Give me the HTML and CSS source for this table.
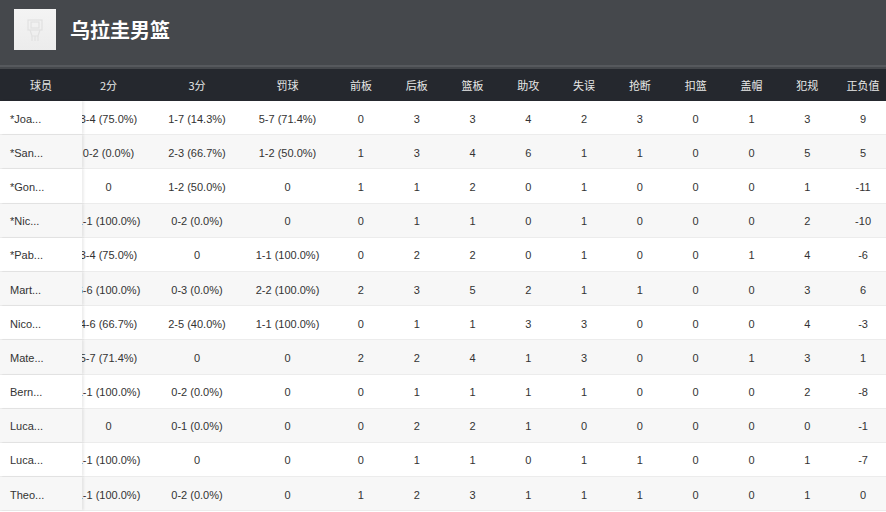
FILE: index.html
```html
<!DOCTYPE html>
<html lang="zh">
<head>
<meta charset="utf-8">
<link rel="stylesheet" href="styles.css">
</head>
<body>
<div class="page">
  <header class="top">
    <div class="logo">
      <svg width="42" height="41" viewBox="0 0 42 41">
        <g fill="none" stroke="#e1e1e1" stroke-width="1.2">
          <rect x="14" y="11" width="14" height="10"/>
          <rect x="17" y="13" width="8" height="6"/>
          <path d="M16 21 L18 27 L24 27 L26 21"/>
          <path d="M18 27 L18 32 M21 27 L21 32 M24 27 L24 32"/>
        </g>
      </svg>
    </div>
    <h1 class="title">乌拉圭男篮</h1>
  </header>
  <div class="table">
    <div class="row head">
      <div class="cell name">球员</div>
      <div class="cell clip"><span>2分</span></div>
      <div class="cell">3分</div>
      <div class="cell">罚球</div>
      <div class="cell">前板</div>
      <div class="cell">后板</div>
      <div class="cell">篮板</div>
      <div class="cell">助攻</div>
      <div class="cell">失误</div>
      <div class="cell">抢断</div>
      <div class="cell">扣篮</div>
      <div class="cell">盖帽</div>
      <div class="cell">犯规</div>
      <div class="cell">正负值</div>
    </div>
    <div class="row">
      <div class="cell name">*Joa...</div><div class="cell clip"><span>3-4 (75.0%)</span></div><div class="cell">1-7 (14.3%)</div><div class="cell">5-7 (71.4%)</div>
      <div class="cell">0</div><div class="cell">3</div><div class="cell">3</div><div class="cell">4</div><div class="cell">2</div><div class="cell">3</div><div class="cell">0</div><div class="cell">1</div><div class="cell">3</div><div class="cell">9</div>
    </div>
    <div class="row alt">
      <div class="cell name">*San...</div><div class="cell clip"><span>0-2 (0.0%)</span></div><div class="cell">2-3 (66.7%)</div><div class="cell">1-2 (50.0%)</div>
      <div class="cell">1</div><div class="cell">3</div><div class="cell">4</div><div class="cell">6</div><div class="cell">1</div><div class="cell">1</div><div class="cell">0</div><div class="cell">0</div><div class="cell">5</div><div class="cell">5</div>
    </div>
    <div class="row">
      <div class="cell name">*Gon...</div><div class="cell clip"><span>0</span></div><div class="cell">1-2 (50.0%)</div><div class="cell">0</div>
      <div class="cell">1</div><div class="cell">1</div><div class="cell">2</div><div class="cell">0</div><div class="cell">1</div><div class="cell">0</div><div class="cell">0</div><div class="cell">0</div><div class="cell">1</div><div class="cell">-11</div>
    </div>
    <div class="row alt">
      <div class="cell name">*Nic...</div><div class="cell clip"><span>1-1 (100.0%)</span></div><div class="cell">0-2 (0.0%)</div><div class="cell">0</div>
      <div class="cell">0</div><div class="cell">1</div><div class="cell">1</div><div class="cell">0</div><div class="cell">1</div><div class="cell">0</div><div class="cell">0</div><div class="cell">0</div><div class="cell">2</div><div class="cell">-10</div>
    </div>
    <div class="row">
      <div class="cell name">*Pab...</div><div class="cell clip"><span>3-4 (75.0%)</span></div><div class="cell">0</div><div class="cell">1-1 (100.0%)</div>
      <div class="cell">0</div><div class="cell">2</div><div class="cell">2</div><div class="cell">0</div><div class="cell">1</div><div class="cell">0</div><div class="cell">0</div><div class="cell">1</div><div class="cell">4</div><div class="cell">-6</div>
    </div>
    <div class="row alt">
      <div class="cell name">Mart...</div><div class="cell clip"><span>6-6 (100.0%)</span></div><div class="cell">0-3 (0.0%)</div><div class="cell">2-2 (100.0%)</div>
      <div class="cell">2</div><div class="cell">3</div><div class="cell">5</div><div class="cell">2</div><div class="cell">1</div><div class="cell">1</div><div class="cell">0</div><div class="cell">0</div><div class="cell">3</div><div class="cell">6</div>
    </div>
    <div class="row">
      <div class="cell name">Nico...</div><div class="cell clip"><span>4-6 (66.7%)</span></div><div class="cell">2-5 (40.0%)</div><div class="cell">1-1 (100.0%)</div>
      <div class="cell">0</div><div class="cell">1</div><div class="cell">1</div><div class="cell">3</div><div class="cell">3</div><div class="cell">0</div><div class="cell">0</div><div class="cell">0</div><div class="cell">4</div><div class="cell">-3</div>
    </div>
    <div class="row alt">
      <div class="cell name">Mate...</div><div class="cell clip"><span>5-7 (71.4%)</span></div><div class="cell">0</div><div class="cell">0</div>
      <div class="cell">2</div><div class="cell">2</div><div class="cell">4</div><div class="cell">1</div><div class="cell">3</div><div class="cell">0</div><div class="cell">0</div><div class="cell">1</div><div class="cell">3</div><div class="cell">1</div>
    </div>
    <div class="row">
      <div class="cell name">Bern...</div><div class="cell clip"><span>1-1 (100.0%)</span></div><div class="cell">0-2 (0.0%)</div><div class="cell">0</div>
      <div class="cell">0</div><div class="cell">1</div><div class="cell">1</div><div class="cell">1</div><div class="cell">1</div><div class="cell">0</div><div class="cell">0</div><div class="cell">0</div><div class="cell">2</div><div class="cell">-8</div>
    </div>
    <div class="row alt">
      <div class="cell name">Luca...</div><div class="cell clip"><span>0</span></div><div class="cell">0-1 (0.0%)</div><div class="cell">0</div>
      <div class="cell">0</div><div class="cell">2</div><div class="cell">2</div><div class="cell">1</div><div class="cell">0</div><div class="cell">0</div><div class="cell">0</div><div class="cell">0</div><div class="cell">0</div><div class="cell">-1</div>
    </div>
    <div class="row">
      <div class="cell name">Luca...</div><div class="cell clip"><span>1-1 (100.0%)</span></div><div class="cell">0</div><div class="cell">0</div>
      <div class="cell">0</div><div class="cell">1</div><div class="cell">1</div><div class="cell">0</div><div class="cell">1</div><div class="cell">1</div><div class="cell">0</div><div class="cell">0</div><div class="cell">1</div><div class="cell">-7</div>
    </div>
    <div class="row alt">
      <div class="cell name">Theo...</div><div class="cell clip"><span>1-1 (100.0%)</span></div><div class="cell">0-2 (0.0%)</div><div class="cell">0</div>
      <div class="cell">1</div><div class="cell">2</div><div class="cell">3</div><div class="cell">1</div><div class="cell">1</div><div class="cell">1</div><div class="cell">0</div><div class="cell">0</div><div class="cell">1</div><div class="cell">0</div>
    </div>
  </div>
</div>
</body>
</html>
```

FILE: styles.css
```css
* { box-sizing: border-box; }
html, body { margin: 0; padding: 0; background: #ffffff; }
body {
  width: 886px;
  height: 512px;
  overflow: hidden;
  font-family: "Liberation Sans", "Noto Sans CJK SC", sans-serif;
  font-size: 11px;
  color: #333333;
}
.page { width: 886px; overflow: hidden; }
.top {
  height: 67px;
  padding: 9px 14px 0;
  display: flex;
  align-items: flex-start;
  gap: 14px;
  background: #45484c;
  border-bottom: 2px solid #56595d;
}
.logo {
  width: 42px;
  height: 41px;
  background: linear-gradient(#f4f4f4, #ececec);
  display: flex;
}
.title {
  margin: 0;
  height: 41px;
  line-height: 41px;
  font-family: "Noto Sans CJK SC", sans-serif;
  font-size: 20px;
  font-weight: 700;
  color: #ffffff;
}
.table { width: 886px; overflow: hidden; }
.row {
  display: grid;
  grid-template-columns: 82px 70px 90px 91px repeat(10, 55.8px);
  width: 891px;
  height: 34.2px;
  padding-top: 2px;
  background: #ffffff;
  border-bottom: 1px solid #ececec;
}
.row.alt { background: #f7f7f7; }
.row.head {
  background: #25282e;
  border-top: 2px solid #45484c;
  border-bottom: none;
  padding-top: 0;
  color: #e8e8e8;
  height: 34px;
  font-family: "Noto Sans CJK SC", sans-serif;
}
.cell {
  display: flex;
  align-items: center;
  justify-content: center;
  white-space: nowrap;
}
.cell.name {
  justify-content: flex-start;
  padding-left: 10px;
  background: inherit;
  position: relative;
  z-index: 1;
  margin-top: -2px;
  padding-top: 2px;
  box-shadow: 2px 0 2px rgba(0, 0, 0, 0.07);
}
.head .cell.name {
  justify-content: center;
  padding-left: 0;
  margin-top: 0;
  padding-top: 0;
  box-shadow: none;
}
.cell.clip { overflow: hidden; justify-content: flex-start; }
.cell.clip span {
  flex: none;
  width: 91px;
  margin-left: -19px;
  text-align: center;
}
```
